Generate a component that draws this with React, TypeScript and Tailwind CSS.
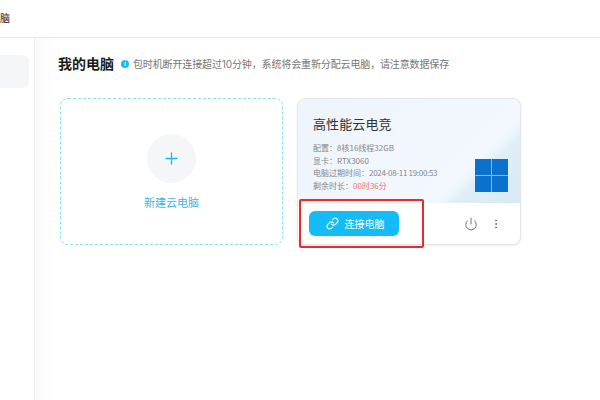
import { Link, Power, MoreVertical, Plus } from "lucide-react";

const font = { fontFamily: '"Inter","Noto Sans CJK SC",sans-serif' };
const cjk = { fontFamily: '"Noto Sans CJK SC",sans-serif' };

export default function App() {
  return (
    <div className="relative flex h-[400px] w-[600px] flex-col overflow-hidden bg-white" style={font}>
      <header className="flex h-[38px] shrink-0 items-center border-b border-[#e8e8e8] pb-[1px]">
        <span className="text-[10px] font-medium leading-none text-[#444]">脑</span>
      </header>
      <div className="flex flex-1">
        <aside className="w-[35px] shrink-0 border-r border-[#ececec] pt-[17px]">
          <div className="h-[33px] w-[29px] rounded-r-[6px] bg-[#f5f6f7]" />
        </aside>
        <main className="flex-1 bg-gradient-to-r from-[#fafafa] to-white to-[4%] pl-[23px] pt-[18px]">
          <div className="flex h-[16px] items-center">
            <h1 className="text-[14px] font-bold leading-none text-[#1c1c1c]">我的电脑</h1>
            <span className="ml-[7px] flex h-[8px] w-[8px] items-center justify-center rounded-full bg-[#18b9f5] text-[6px] font-bold leading-none text-white">i</span>
            <p className="ml-[4px] text-[10px] leading-none tracking-[-0.13px] whitespace-nowrap text-[#777]">
              包时机断开连接超过10分钟，系统将会重新分配云电脑，请注意数据保存
            </p>
          </div>
          <div className="mt-[26px] ml-[2px] flex gap-[14px]">
            <div className="flex h-[147px] w-[223px] flex-col items-center rounded-[8px] border border-dashed border-[#8ddffa] pt-[35px]">
              <div className="flex h-[49px] w-[49px] items-center justify-center rounded-full bg-[#f4f6f8]">
                <Plus size={19} strokeWidth={1.6} className="text-[#18b9f5]" />
              </div>
              <span className="mt-[13px] text-[11px] leading-[14px] text-[#45b4e0]">新建云电脑</span>
            </div>

            <div className="h-[147px] w-[224px] overflow-hidden rounded-[8px] border border-[#e4e6e8] bg-white shadow-[0_1px_2px_rgba(0,0,0,0.08)]">
              <div className="relative h-[104px] bg-[linear-gradient(135deg,#edf4fa_0%,#f3f8fe_74%,#dfedf7_80%,#d8e9f4_100%)] pl-[15px] pt-[15px]">
                <h2 className="text-[13px] leading-[20px] tracking-[0.1px] text-[#333]">高性能云电竞</h2>
                <div className="mt-[8px] text-[8px] leading-[12.5px] text-[#888]" style={cjk}>
                  <p>配置：8核16线程32GB</p>
                  <p>显卡：RTX3060</p>
                  <p>电脑过期时间：<span className="tracking-[-0.3px]">2024-08-11 19:00:53</span></p>
                  <p>剩余时长：<span className="text-[#f56c6c]">00时36分</span></p>
                </div>
                <div className="absolute right-[12px] top-[60px] grid h-[33px] w-[33px] grid-cols-2 gap-[1px] bg-[#7fbce8]">
                  <i className="bg-[#0a72cc]" />
                  <i className="bg-[#0a72cc]" />
                  <i className="bg-[#0a72cc]" />
                  <i className="bg-[#0a72cc]" />
                </div>
              </div>
              <div className="flex h-[41px] items-center pl-[11px] pr-[18px]">
                <button className="flex h-[25px] w-[90px] items-center justify-center gap-[6px] rounded-[6px] bg-[#14bcf6] pl-[2px] text-[10px] leading-none text-white">
                  <Link size={13} />
                  连接电脑
                </button>
                <Power size={14} strokeWidth={1.4} className="ml-auto text-[#555]" />
                <MoreVertical size={12} strokeWidth={1.6} className="ml-[12px] text-[#555]" />
              </div>
            </div>
          </div>
        </main>
      </div>
      <div className="absolute left-[299px] top-[199px] h-[49px] w-[125px] rounded-[2px] border-2 border-[#ec2a2c]" />
    </div>
  );
}
